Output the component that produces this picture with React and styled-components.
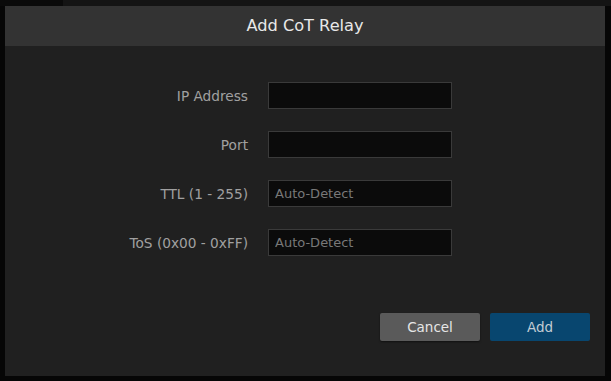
import React from 'react';
import styled, { createGlobalStyle } from 'styled-components';

const GlobalStyle = createGlobalStyle`
    html, body {
        margin: 0;
        padding: 0;
        background: #060606;
        font-family: "DejaVu Sans", Tahoma, sans-serif;
    }
    * {
        box-sizing: border-box;
    }
`;

const Page = styled.div`
    width: 611px;
    height: 381px;
    display: flex;
    flex-direction: column;
    background: #060606;
    overflow: hidden;
`;

const TopStrip = styled.div`
    height: 6px;
    display: flex;
    flex-shrink: 0;

    .left {
        width: 63px;
        background: #0a0a0a;
    }
    .right {
        flex: 1;
        background: #141414;
    }
`;

const Modal = styled.div`
    width: 600px;
    height: 370px;
    margin-left: 5px;
    display: flex;
    flex-direction: column;
    background: #202020;
`;

const Header = styled.div`
    height: 40px;
    flex-shrink: 0;
    display: flex;
    align-items: center;
    justify-content: center;
    background: #333333;
    color: #e8e8e8;
    font-size: 16.2px;
    padding-bottom: 1px;
`;

const Form = styled.div`
    display: grid;
    grid-template-columns: 243px 184px;
    grid-auto-rows: 27px;
    column-gap: 20px;
    row-gap: 22px;
    padding-top: 36px;
`;

const Label = styled.label`
    display: flex;
    align-items: center;
    justify-content: flex-end;
    color: #a0a0a0;
    font-size: 13.7px;
    white-space: nowrap;
`;

const Input = styled.input`
    width: 184px;
    height: 27px;
    background: #0b0b0b;
    border: 1px solid #3a3a3a;
    border-radius: 0;
    outline: none;
    padding: 0 6px;
    color: #cccccc;
    font-family: "DejaVu Sans", Tahoma, sans-serif;
    font-size: 13px;

    &::placeholder {
        color: #787878;
    }
`;

const Footer = styled.div`
    margin-top: auto;
    display: flex;
    justify-content: flex-end;
    gap: 10px;
    padding: 0 15px 35px 0;
`;

const Button = styled.button`
    width: 100px;
    height: 28px;
    border: none;
    border-radius: 2px;
    font-family: "DejaVu Sans", Tahoma, sans-serif;
    font-size: 13.5px;
    padding: 0;
    cursor: pointer;
    background: ${(p) => (p.primary ? '#08466f' : '#5a5a5a')};
    color: ${(p) => (p.primary ? '#c2ccd4' : '#e6e6e6')};
    box-shadow: ${(p) => (p.primary ? 'none' : '0 1px 2px rgba(0,0,0,0.5)')};
`;

const fields = [
    { label: 'IP Address', placeholder: '' },
    { label: 'Port', placeholder: '' },
    { label: 'TTL (1 - 255)', placeholder: 'Auto-Detect' },
    { label: 'ToS (0x00 - 0xFF)', placeholder: 'Auto-Detect' },
];

function App() {
    return (
        <>
            <GlobalStyle />
            <Page>
                <TopStrip>
                    <div className="left"></div>
                    <div className="right"></div>
                </TopStrip>
                <Modal>
                    <Header>Add CoT Relay</Header>
                    <Form>
                        {fields.map((f) => (
                            <React.Fragment key={f.label}>
                                <Label>{f.label}</Label>
                                <Input placeholder={f.placeholder} />
                            </React.Fragment>
                        ))}
                    </Form>
                    <Footer>
                        <Button>Cancel</Button>
                        <Button primary>Add</Button>
                    </Footer>
                </Modal>
            </Page>
        </>
    );
}

export default App;
